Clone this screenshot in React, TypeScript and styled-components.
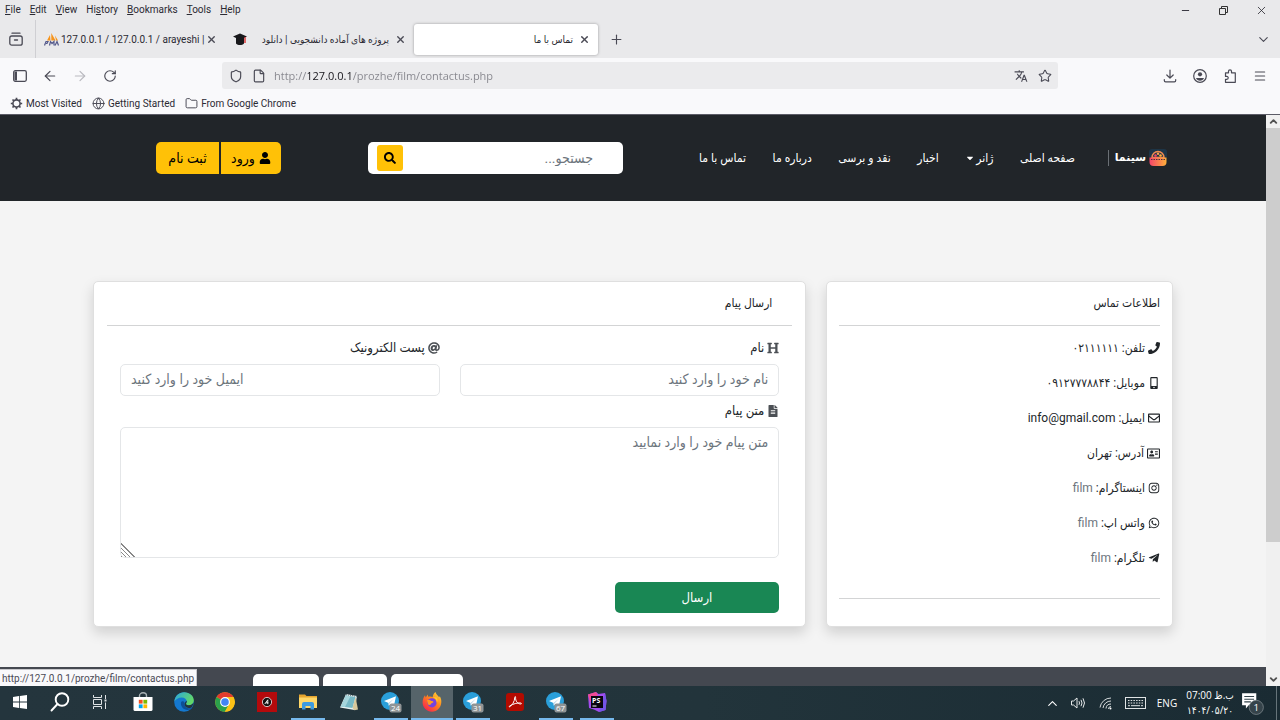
import React from 'react';
import styled, { createGlobalStyle } from 'styled-components';
import {
  FaPhone, FaMobileAlt, FaRegEnvelope, FaRegAddressCard, FaInstagram, FaWhatsapp,
  FaTelegramPlane, FaHeading, FaAt, FaFileAlt, FaUser, FaSearch, FaCaretDown,
} from 'react-icons/fa';
import { MdTranslate } from 'react-icons/md';
import {
  ArrowLeft, ArrowRight, RotateCw, Shield, File, Star, Menu, ChevronDown, ChevronUp,
  X, Plus, Minus, Globe, Folder,
} from 'lucide-react';

const persian = `Roboto, 'DejaVu Sans Condensed', 'DejaVu Sans', sans-serif`;
const system = `Roboto, 'DejaVu Sans Condensed', 'DejaVu Sans', sans-serif`;
const humanist = `'Open Sans', 'DejaVu Sans Condensed', 'DejaVu Sans', sans-serif`;

const GlobalStyle = createGlobalStyle`
  *, *::before, *::after { box-sizing: border-box; }
  body { margin: 0; font-family: ${persian}; color: #212529; }
  button, input, textarea { font: inherit; color: inherit; margin: 0; }
  button { border: 0; background: none; padding: 0; cursor: pointer; }
  a { color: inherit; text-decoration: none; }
`;

const Desktop = styled.div`
  display: flex;
  flex-direction: column;
  height: 100vh;
  overflow: hidden;
`;

/* ---------- browser window ---------- */

const Browser = styled.div`
  font-family: ${system};
  font-size: 10px;
  line-height: 16px;
  color: #2b2a33;
  background: #f9f9fb;
  border-bottom: 1px solid #5b5b66;
`;

const TitleBar = styled.div`
  background: #e9e9eb;
  display: flex;
  justify-content: space-between;
  align-items: center;
  height: 20px;
  padding-left: 5px;
`;

const MenuList = styled.div`
  display: flex;
  gap: 9px;
`;

const MenuButton = styled.button`
  u { text-underline-offset: 1px; }
`;

const WindowButtons = styled.div`
  display: flex;
`;

const WindowButton = styled.button`
  width: 38px;
  height: 20px;
  display: grid;
  place-items: center;
`;

const TabStrip = styled.div`
  background: #e9e9eb;
  height: 38px;
  display: flex;
  align-items: center;
`;

const ViewButton = styled.button`
  width: 36px;
  height: 38px;
  display: grid;
  place-items: center;
  padding-right: 3px;
  border-right: 1px solid #cfcfd3;
  color: #4a4a55;
`;

const Tab = styled.div<{ $active?: boolean }>`
  display: flex;
  align-items: center;
  width: ${p => (p.$active ? 184 : 189)}px;
  height: 31px;
  padding: 0 9px 0 8px;
  border-radius: 3px;
  background: ${p => (p.$active ? '#fff' : 'transparent')};
  box-shadow: ${p => (p.$active ? '0 0 3px rgba(0, 0, 0, 0.35)' : 'none')};
`;

const TabTitle = styled.button<{ $rtl?: boolean }>`
  flex: 1;
  min-width: 0;
  overflow: hidden;
  white-space: nowrap;
  padding: 1px ${p => (p.$rtl ? 6 : 0)}px 0 2px;
  text-align: ${p => (p.$rtl ? 'right' : 'left')};
  direction: ${p => (p.$rtl ? 'rtl' : 'ltr')};
`;

const IconButton = styled.button<{ $size?: number; $dim?: boolean }>`
  width: ${p => p.$size ?? 30}px;
  height: ${p => p.$size ?? 30}px;
  flex: none;
  display: grid;
  place-items: center;
  color: ${p => (p.$dim ? '#b9b9bf' : '#4a4a55')};
`;

const Spacer = styled.div`
  flex: 1;
`;

const Toolbar = styled.div`
  display: flex;
  align-items: center;
  height: 35px;
  padding: 0 5px;
`;

const AddressBar = styled.div`
  flex: 0 1 836px;
  display: flex;
  align-items: center;
  height: 27px;
  padding: 0 2px;
  border-radius: 3px;
  background: #ebebed;
`;

const ToolbarStart = styled.div`
  display: flex;
  flex: 1 0 160px;
`;

const ToolbarEnd = styled.div`
  display: flex;
  justify-content: flex-end;
  flex: 1 0 160px;
`;

const AddressInput = styled.input`
  flex: 1;
  min-width: 0;
  border: 0;
  outline: 0;
  padding: 0 0 0 4px;
  font-family: ${humanist};
  font-size: 11px;
  line-height: 18px;
  color: #85858c;
  background: linear-gradient(to right, #85858c 38px, #15141a 38px, #15141a 81px, #85858c 81px);
  background-clip: text;
  -webkit-background-clip: text;
  -webkit-text-fill-color: transparent;
`;

const Bookmarks = styled.div`
  display: flex;
  gap: 10px;
  height: 21px;
  padding: 0 10px;
`;

const Bookmark = styled.a`
  display: flex;
  align-items: center;
  gap: 3px;
  svg { color: #4a4a55; }
`;

/* ---------- web page ---------- */

const Viewport = styled.div`
  position: relative;
  flex: 1;
  min-height: 0;
  display: flex;
`;

const Page = styled.div`
  flex: 1;
  min-width: 0;
  overflow: hidden;
  background: #f4f4f4;
  direction: rtl;
  font-size: 12px;
  line-height: 18px;
`;

const Container = styled.div`
  width: 100%;
  max-width: 1080px;
  margin: 0 auto;
`;

const SiteHeader = styled.header`
  background: #212529;
  color: #fff;
`;

const HeaderRow = styled(Container)`
  display: flex;
  align-items: center;
  height: 86px;
  padding: 0 6px 0 63px;
`;

const Logo = styled.a`
  display: flex;
  align-items: center;
  gap: 3px;
  width: 59px;
  height: 16px;
  border-left: 1px solid #6b7075;
  font-family: 'DejaVu Sans', sans-serif;
  font-weight: 700;
  font-size: 11px;
  margin-left: 33px;
  white-space: nowrap;
`;

const Nav = styled.nav`
  flex: 0 1 376px;
  display: flex;
  justify-content: space-between;
  white-space: nowrap;
`;

const NavLink = styled.a`
  display: flex;
  align-items: center;
  gap: 1px;
  font-size: 12px;
`;

const SearchForm = styled.form`
  flex: 0 1 255px;
  display: flex;
  align-items: center;
  height: 32px;
  margin: 0 76px 0 auto;
  padding: 0 30px 0 9px;
  border-radius: 5px;
  background: #fff;
`;

const SearchInput = styled.input`
  flex: 1;
  min-width: 0;
  border: 0;
  outline: 0;
  padding: 0;
  background: none;
  color: #212529;
  font-size: 14px;
  &::placeholder { color: #6c757d; opacity: 1; }
`;

const SearchButton = styled.button`
  width: 26px;
  height: 26px;
  display: grid;
  place-items: center;
  border-radius: 3px;
  background: #ffc107;
  color: #000;
`;

const AuthGroup = styled.div`
  display: flex;
  gap: 2px;
  border-radius: 5px;
  overflow: hidden;
`;

const AuthLink = styled.a<{ $width: number }>`
  display: flex;
  align-items: center;
  justify-content: center;
  gap: 4px;
  width: ${p => p.$width}px;
  height: 32px;
  background: #ffc107;
  color: #000;
  font-size: 14px;
`;

const Cards = styled(Container)`
  display: grid;
  grid-template-columns: repeat(3, 1fr);
  gap: 20px;
  align-items: start;
  padding: 80px 0 40px;
`;

const Card = styled.section<{ $wide?: boolean }>`
  grid-column: span ${p => (p.$wide ? 2 : 1)};
  padding: 12px ${p => (p.$wide ? 13 : 12)}px 13px;
  border: 1px solid #dfdfdf;
  border-radius: 5px;
  background: #fff;
  box-shadow: 0 6px 13px rgba(0, 0, 0, 0.15);
`;

const CardTitle = styled.h2<{ $inset?: boolean }>`
  margin: 0;
  padding: 0 ${p => (p.$inset ? 20 : 0)}px 13px 0;
  border-bottom: 1px solid #d3d4d5;
  font-size: 12px;
  font-weight: 400;
  line-height: 18px;
`;

const ContactList = styled.ul`
  list-style: none;
  margin: 0;
  padding: 13px 0 31px;
  display: grid;
  gap: 17px;
  border-bottom: 1px solid #d3d4d5;
`;

const ContactItem = styled.li`
  display: flex;
  align-items: center;
  gap: 3px;
  white-space: pre;
  font-size: 12px;
  svg { flex: none; }
`;

const MutedLink = styled.a`
  color: #6c757d;
`;

const CardFoot = styled.div`
  height: 14px;
`;

const Form = styled.form`
  display: grid;
  grid-template-columns: 1fr 1fr;
  gap: 6px 20px;
  padding: 13px 13px 0;
`;

const Field = styled.div<{ $full?: boolean }>`
  grid-column: ${p => (p.$full ? '1 / -1' : 'auto')};
  display: grid;
  gap: 7px;
`;

const Label = styled.label`
  display: flex;
  align-items: center;
  gap: 3px;
  font-size: 13px;
  svg { color: #4c5055; }
`;

const TextInput = styled.input<{ $left?: boolean }>`
  width: 100%;
  height: 32px;
  padding: 0 10px 2px;
  border: 1px solid #e4e6e8;
  border-radius: 5px;
  outline: 0;
  background: #fff;
  font-size: 14px;
  text-align: ${p => (p.$left ? 'left' : 'right')};
  &::placeholder { color: #6c757d; opacity: 1; }
`;

const TextArea = styled.textarea`
  display: block;
  width: 100%;
  height: 131px;
  padding: 4px 10px;
  border: 1px solid #e4e6e8;
  border-radius: 5px;
  outline: 0;
  resize: vertical;
  background: #fff;
  font-size: 14px;
  line-height: 20px;
  &::placeholder { color: #6c757d; opacity: 1; }
  &::-webkit-resizer {
    background: linear-gradient(45deg,
      #888 0 1px, transparent 1px 3px, #888 3px 4px, transparent 4px 6px,
      #888 6px 7px, transparent 7px 9px, #888 9px 10px, transparent 10px);
  }
`;

const SubmitButton = styled.button`
  grid-column: 1 / -1;
  width: 25%;
  height: 31px;
  margin-top: 18px;
  border-radius: 5px;
  background: #198754;
  color: #fff;
  font-size: 13px;
`;

const SiteFooter = styled.footer`
  display: flex;
  direction: ltr;
  gap: 4px;
  height: 40px;
  padding: 7px 0 0 253px;
  background: #444850;
`;

const FooterBadge = styled.div<{ $width: number }>`
  width: ${p => p.$width}px;
  border-radius: 5px;
  background: #fff;
`;

const ScrollBar = styled.div`
  width: 14px;
  display: flex;
  flex-direction: column;
  background: #f0f0f0;
`;

const ScrollArrow = styled.button`
  height: 13px;
  display: grid;
  place-items: center;
  color: #505050;
`;

const ScrollTrack = styled.div`
  flex: 1;
`;

const ScrollThumb = styled.div`
  height: 76%;
  background: #cdcdcd;
`;

const StatusTip = styled.div`
  position: absolute;
  left: 0;
  bottom: 0;
  padding: 1px 2px 0;
  border: solid #c8c8cc;
  border-width: 1px 1px 0 0;
  background: #f9f9fb;
  color: #4a4a55;
  font-family: ${system};
  font-size: 10px;
  line-height: 15px;
`;

/* ---------- taskbar ---------- */

const Taskbar = styled.div`
  display: flex;
  align-items: stretch;
  height: 34px;
  background: linear-gradient(to right, #24353d, #22343b 55%, #1a2b33);
  color: #fff;
  font-family: ${humanist};
`;

const StartGroup = styled.div`
  display: flex;
  width: 120px;
`;

const AppGroup = styled.div`
  display: flex;
  width: 496px;
  margin-left: 2px;
`;

const TaskButton = styled.button<{ $active?: boolean; $open?: boolean }>`
  flex: 1;
  display: flex;
  flex-direction: column;
  align-items: center;
  justify-content: space-between;
  color: #fff;
  background: ${p => (p.$active ? '#56646a' : 'transparent')};
  &::after {
    content: '';
    width: ${p => (p.$active ? '100%' : '34px')};
    height: 2px;
    background: ${p => (p.$open ? '#76b9ed' : 'transparent')};
  }
  svg { margin: auto; }
`;

const Tray = styled.div`
  display: flex;
  align-items: center;
  padding-right: 3px;
`;

const TrayButton = styled.button<{ $width: number }>`
  width: ${p => p.$width}px;
  height: 34px;
  display: grid;
  place-items: center;
  color: #fff;
  font-size: 10px;
  line-height: 15px;
`;

const TrayEdge = styled.div`
  width: 1px;
  height: 34px;
  margin-left: 7px;
  background: #66747a;
`;

const WindowsIcon = () => (
  <svg width="14" height="14" viewBox="0 0 14 14" fill="#fff">
    <path d="M0 2l6-.9v5.5H0zM6.8 1L14 0v6.6H6.8zM0 7.4h6v5.5L0 12zM6.8 7.4H14V14l-7.2-1z" />
  </svg>
);

const LensIcon = () => (
  <svg width="20" height="20" viewBox="0 0 20 20" fill="none" stroke="#fff" strokeWidth="1.9" strokeLinecap="round">
    <circle cx="12" cy="7.5" r="6.3" />
    <path d="M7.5 12L1.5 18.5" />
  </svg>
);

const TaskViewIcon = () => (
  <svg width="16" height="14" viewBox="0 0 16 14" fill="none" stroke="#dfe3e5">
    <path d="M1.500 0v2.500h8V0M1.500 14v-2.500h8V14M1.500 4.500h8v5h-8zM13.500 0v4M13.500 7.500v6.500" />
    <path d="M12.500 4.500h2v2h-2z" fill="#dfe3e5" stroke="none" />
  </svg>
);

const StoreIcon = () => (
  <svg width="20" height="20" viewBox="0 0 20 20">
    <path d="M6.500 6V3.800a3.500 3 0 0 1 7 0V6" fill="none" stroke="#aab3b7" strokeWidth="1.400" />
    <path d="M.5 5h19v12.500a1.500 1.500 0 0 1-1.500 1.500H2a1.500 1.500 0 0 1-1.500-1.500z" fill="#fff" />
    <path d="M5.800 7.800h3.800v3.800H5.800z" fill="#f25022" />
    <path d="M10.400 7.800h3.800v3.800h-3.800z" fill="#7fba00" />
    <path d="M5.800 12.400h3.800v3.800H5.800z" fill="#00a4ef" />
    <path d="M10.400 12.400h3.800v3.800h-3.800z" fill="#ffb900" />
  </svg>
);

const EdgeIcon = () => (
  <svg width="20" height="20" viewBox="0 0 20 20">
    <defs>
      <linearGradient id="edge" x1="0" y1="0" x2="1" y2="0.500">
        <stop offset="0" stopColor="#2ba5e0" />
        <stop offset="1" stopColor="#62d868" />
      </linearGradient>
    </defs>
    <circle cx="10" cy="10" r="9.800" fill="#1478cf" />
    <path d="M.3 9.500C1 3.800 5.200.2 10.200.2c5.600 0 9.600 3.700 9.600 8 0 3-2.300 5-5 5-1.800 0-2.900-.6-2.900-1.200 0-.5.9-1 .9-2.500 0-2.300-2.100-4-5-4C4.600 5.500 1.500 7.200.3 9.500z" fill="url(#edge)" />
    <path d="M7 10.500c-.8 4.500 3.500 8.300 8.200 7.300 1.500-.4 2.700-1.200 3.600-2.300-4.500 2-8.800.5-8.300-4.700C9.700 8.800 7.500 8.900 7 10.500z" fill="#0d4f97" />
    <path d="M12.800 8.800c.3 1.700-1 2.500-.9 3.200.3.900 2 1.200 2.900 1.200 2.200 0 4-1.200 4.700-2.800-.2 2-1 3.700-2 5-3 1.200-5.900.3-6.800-2.200-.6-1.800.7-3.400 2.100-4.400z" fill="#22343b" />
  </svg>
);

const ChromeIcon = () => (
  <svg width="20" height="20" viewBox="0 0 20 20">
    <circle cx="10" cy="10" r="9.800" fill="#fbc116" />
    <path d="M10 10L1.500 5.100a9.800 9.800 0 0 1 17 0z" fill="#e33b2e" />
    <path d="M10 10L1.500 5.100A9.800 9.800 0 0 0 9.900 19.800L14 12.300z" fill="#2ba14b" />
    <path d="M10 5.100h8.500a9.800 9.800 0 0 1-8.600 14.700L14.200 12.500z" fill="#fbc116" />
    <circle cx="10" cy="10" r="4.900" fill="#fff" />
    <circle cx="10" cy="10" r="3.800" fill="#4285f4" />
  </svg>
);

const RedAppIcon = () => (
  <svg width="20" height="20" viewBox="0 0 20 20">
    <rect width="20" height="20" fill="#b40a0c" />
    <circle cx="10" cy="10" r="4.600" fill="#111" stroke="#eee" strokeWidth=".8" />
    <path d="M7.800 12L10.800 7.800V12.200M8.800 10.800h2.500" fill="none" stroke="#fff" strokeWidth=".9" />
  </svg>
);

const FolderIcon = () => (
  <svg width="20" height="18" viewBox="0 0 20 18">
    <path d="M1 1.500h6l1.500 1.500H19v4H1z" fill="#e6a52f" />
    <path d="M1 4.500h18V15H1z" fill="#ffd768" />
    <path d="M4 16.500V11a2 2 0 0 1 2-2h8a2 2 0 0 1 2 2v5.500h-3.500V13h-5v3.500z" fill="#3d9be0" />
  </svg>
);

const NotepadIcon = () => (
  <svg width="20" height="20" viewBox="0 0 20 20">
    <path d="M7 2l11 2-2.500 14L1 15.500z" fill="#e9f3f4" />
    <path d="M7 3.500l9.500 1.500-3 11L2 14.500z" fill="#77b9c6" />
    <path d="M7 3.500l4.500.8L6 15 2 14.500z" fill="#a6d6dd" />
    <path d="M16.500 5L19 17.500l-3.500.7-2-2.200z" fill="#d8c89b" />
    <path d="M7 2.600l11 1.800" stroke="#51636a" strokeDasharray="1 1" />
  </svg>
);

const TelegramIcon = ({ count }: { count: string }) => (
  <svg width="24" height="24" viewBox="0 0 24 24">
    <circle cx="11" cy="11" r="9" fill="#2a9fda" />
    <path d="M5 11l12-4.700-2.200 10.200-3.300-2.400-1.700 1.600-.3-2.800z" fill="#fff" />
    <path d="M9.500 12.900l5.300-4.200-4.300 4.900-.7 2.100z" fill="#b5d4e8" />
    <rect x="10.500" y="13.500" width="12" height="9" rx="2" fill="#8f9496" />
    <text x="16.500" y="21" textAnchor="middle" fontFamily="Open Sans, sans-serif" fontSize="8" fill="#fff">{count}</text>
  </svg>
);

const FirefoxIcon = () => (
  <svg width="20" height="20" viewBox="0 0 20 20">
    <defs>
      <linearGradient id="fire" x1="1" y1="0" x2="0.200" y2="1">
        <stop offset="0" stopColor="#ffe245" />
        <stop offset="0.450" stopColor="#ff8a1c" />
        <stop offset="1" stopColor="#f5204f" />
      </linearGradient>
    </defs>
    <path d="M13.500 0c.8 2.600 2.500 3.500 3.600 5.200l.7-1C19 6 19.500 8.200 19.300 10.500c-.4 5.300-4.400 9.200-9.400 9.200C4.700 19.700.6 15.700.6 10.600c0-3 .9-5.400 2.400-7.300l.7 2.100L5.700 2.500l.6 2.300c1.800-.6 3.400-.2 4.300.4C10.900 3.200 11.800 1.300 13.500 0z" fill="url(#fire)" />
    <circle cx="10" cy="10.800" r="4.600" fill="#7542e0" />
    <path d="M5 8.300c2-.7 3.500 0 4.500.8 1 .1 1.900.3 1.900.9 0 .8-1.200 1-2 1.300-.5 1.700-2 2-3.300 1.200z" fill="#ff9a1f" />
    <path d="M10.600 5.200c2.900.8 4.500 3 4.200 5.600 1.300-2 .9-4.200-.5-5.500z" fill="#ffc931" />
  </svg>
);

const AcrobatIcon = () => (
  <svg width="18" height="18" viewBox="0 0 18 18">
    <rect width="18" height="18" rx="3" fill="#b30b00" />
    <path d="M3.500 13.800c2.500-1.200 5.200-5.200 5.300-9.500 0-1 .9-1 .8 0-.3 4 2.200 6.800 5.200 6.700.9 0 .8-.9-.1-1-3.500-.5-7.500 1-10.700 2.800-1.100.6-1.300 1.400-.5 1z" fill="none" stroke="#fff" strokeWidth="1" />
  </svg>
);

const PhpStormIcon = () => (
  <svg width="20" height="20" viewBox="0 0 20 20">
    <path d="M1 2.500L9 0l2.500 2L18 1l1.500 8-1 9-6.500 2-5-2.500L2 16z" fill="#a24cf0" />
    <path d="M1 2.500L9 0l2 3-8 7z" fill="#f24a94" />
    <path d="M18 1l1.500 8-1 9-6.500 2 3-10z" fill="#7554e8" />
    <rect x="4" y="4" width="12" height="12" fill="#0a0510" />
    <text x="5" y="10.500" fontFamily="Open Sans, sans-serif" fontWeight="700" fontSize="7" fill="#fff">PS</text>
    <path d="M5.500 14h4" stroke="#fff" />
  </svg>
);

const SpeakerIcon = () => (
  <svg width="15" height="12" viewBox="0 0 15 12" fill="none" stroke="#e6e9ea">
    <path d="M.5 4v4h2L6 11V1L2.500 4z" />
    <path d="M8 4.200q1 1.800 0 3.600M10 2.800q2 3.200 0 6.400M12 1.300q3 4.700 0 9.400" />
  </svg>
);

const WifiIcon = () => (
  <svg width="14" height="14" viewBox="0 0 14 14" fill="none" stroke="#d5dadc">
    <path d="M1 11.500A11 11 0 0 1 12 2M4 12a8 8 0 0 1 8-7M7 12.500A5 5 0 0 1 12 8M9.500 13A2.500 2.500 0 0 1 12 10.500" />
    <circle cx="11.500" cy="12.500" r="1" fill="#fff" stroke="none" />
  </svg>
);

const KeyboardIcon = () => (
  <svg width="21" height="12" viewBox="0 0 21 12" fill="none" stroke="#e0e4e5">
    <rect x=".5" y=".5" width="20" height="11" />
    <path d="M3 3.500h15M3 6h15" strokeDasharray="1.500 1.200" />
    <path d="M3 8.700h2M6 8.700h9M16 8.700h2" />
  </svg>
);

const NoticeIcon = () => (
  <svg width="24" height="24" viewBox="0 0 22 22">
    <path d="M1 2h13v11H7l-2.500 3v-3H1z" fill="#fff" />
    <path d="M3 5h9M3 7.500h9M3 10h6" stroke="#33434a" />
    <circle cx="14" cy="15" r="6.500" fill="#35434a" stroke="#7d888d" strokeWidth=".7" />
    <text x="14" y="18.500" textAnchor="middle" fontFamily="Open Sans, sans-serif" fontSize="9" fill="#fff">1</text>
  </svg>
);

const CinemaIcon = () => (
  <svg width="18" height="18" viewBox="0 0 18 18">
    <defs>
      <linearGradient id="reel" x1="0" y1="0" x2="1" y2="0">
        <stop offset="0" stopColor="#f5456a" />
        <stop offset="1" stopColor="#ffb03a" />
      </linearGradient>
    </defs>
    <rect width="18" height="10" rx="3" fill="#1d3547" />
    <path d="M3 8.500a6 6 0 0 1 12 0z" fill="none" stroke="#f08a50" strokeWidth="1.500" />
    <circle cx="6.500" cy="6.500" r="1.300" fill="#f5456a" />
    <circle cx="9" cy="4.700" r="1.200" fill="#f5a050" />
    <circle cx="11.500" cy="6.500" r="1.300" fill="#ffb03a" />
    <path d="M.5 8.500h17v4.500a4 4 0 0 1-4 4h-9a4 4 0 0 1-4-4z" fill="url(#reel)" />
    <path d="M2 10.500h14" stroke="#4a3040" strokeWidth="1.200" strokeDasharray="1.500 1" />
  </svg>
);

const ViewIcon = () => (
  <svg width="14" height="14" viewBox="0 0 14 14" fill="none" stroke="currentColor" strokeWidth="1.300" strokeLinecap="round">
    <path d="M3 1.200h8" />
    <rect x=".8" y="4" width="12.400" height="9.200" rx="2" />
    <path d="M5.500 8h3" />
  </svg>
);

const SidebarIcon = () => (
  <svg width="14" height="12" viewBox="0 0 14 12" fill="none" stroke="currentColor" strokeWidth="1.300">
    <rect x=".7" y=".7" width="12.600" height="10.600" rx="1.500" />
    <path d="M1.500 1.500h2.500v9H1.500z" fill="currentColor" stroke="none" />
  </svg>
);

const DownloadIcon = () => (
  <svg width="14" height="14" viewBox="0 0 14 14" fill="none" stroke="currentColor" strokeWidth="1.200" strokeLinecap="round" strokeLinejoin="round">
    <path d="M7 1v8M3.800 6L7 9.200 10.200 6M1.300 10.500v1a1.300 1.300 0 0 0 1.300 1.300h8.800a1.300 1.300 0 0 0 1.300-1.300v-1" />
  </svg>
);

const AccountIcon = () => (
  <svg width="14" height="14" viewBox="0 0 14 14">
    <circle cx="7" cy="7" r="6.300" fill="none" stroke="currentColor" strokeWidth="1.200" />
    <circle cx="7" cy="5.300" r="2.100" fill="currentColor" />
    <path d="M3 9h8c-.6 1.800-2.200 2.800-4 2.800S3.600 10.800 3 9z" fill="currentColor" />
  </svg>
);

const ExtensionIcon = () => (
  <svg width="13" height="14" viewBox="0 0 13 14" fill="none" stroke="currentColor" strokeWidth="1.200" strokeLinejoin="round">
    <path d="M1.500 4.500V3.800h3V2.300a1.500 1.500 0 0 1 3 0v1.500h3.800v9.500H1.500v-3h1.300a1.400 1.400 0 0 0 0-2.900H1.500z" />
  </svg>
);

const RestoreIcon = () => (
  <svg width="9" height="9" viewBox="0 0 9 9" fill="none" stroke="#333">
    <path d="M.5 2.500h6v6h-6zM2.500 2.500v-2h6v6h-2" />
  </svg>
);

const GearIcon = () => (
  <svg width="13" height="13" viewBox="0 0 13 13" fill="none" stroke="currentColor">
    <circle cx="6.500" cy="6.500" r="3.600" strokeWidth="1.600" />
    <path d="M6.500 .8v2M6.500 10.200v2M.8 6.500h2M10.200 6.500h2M2.500 2.500l1.400 1.400M9.100 9.100l1.400 1.400M2.500 10.500l1.400-1.400M9.100 3.900l1.400-1.400" strokeWidth="1.700" />
  </svg>
);

const PmaIcon = () => (
  <svg width="15" height="13" viewBox="0 0 15 13">
    <path d="M3 7.500L6 2l.5 5.500zM7.300 7.500V0l4.200 7.500zM11 2.500l3 5h-2z" fill="#f6941d" />
    <path d="M.5 12.500L2 8.500h2l-1 2H2M5.500 12.500l1-4 1.500 2 2-2v4M11 12.500l2-4 1.500 4" fill="none" stroke="#555a8c" strokeWidth="1.200" />
  </svg>
);

const GradCapIcon = () => (
  <svg width="14" height="13" viewBox="0 0 14 13">
    <path d="M0 3.500L7 .5l7 3-3 1.500v5.500c-2 2-6 2-8 0V5z" fill="#18181b" />
    <path d="M12 4.300V10" stroke="#d22" strokeWidth="1.300" />
  </svg>
);

const menus: [string, string, string][] = [
  ['', 'F', 'ile'], ['', 'E', 'dit'], ['', 'V', 'iew'], ['Hi', 's', 'tory'],
  ['', 'B', 'ookmarks'], ['', 'T', 'ools'], ['', 'H', 'elp'],
];

const navLinks = ['صفحه اصلی', 'ژانر', 'اخبار', 'نقد و برسی', 'درباره ما', 'تماس با ما'];

const contacts = [
  { icon: <FaPhone size={12} />, label: 'تلفن', value: '۰۲۱۱۱۱۱۱' },
  { icon: <FaMobileAlt size={12} />, label: 'موبایل', value: '۰۹۱۲۷۷۷۸۸۴۴' },
  { icon: <FaRegEnvelope size={12} />, label: 'ایمیل', value: 'info@gmail.com' },
  { icon: <FaRegAddressCard size={13} />, label: 'آدرس', value: 'تهران' },
  { icon: <FaInstagram size={12} />, label: 'اینستاگرام', link: 'film' },
  { icon: <FaWhatsapp size={12} />, label: 'واتس اپ', link: 'film' },
  { icon: <FaTelegramPlane size={12} />, label: 'تلگرام', link: 'film' },
];

const apps = [
  { name: 'Store', icon: <StoreIcon /> },
  { name: 'Edge', icon: <EdgeIcon /> },
  { name: 'Chrome', icon: <ChromeIcon /> },
  { name: 'Player', icon: <RedAppIcon /> },
  { name: 'Explorer', icon: <FolderIcon />, open: true },
  { name: 'Notepad', icon: <NotepadIcon /> },
  { name: 'Telegram', icon: <TelegramIcon count="24" />, open: true },
  { name: 'Firefox', icon: <FirefoxIcon />, open: true, active: true },
  { name: 'Telegram 2', icon: <TelegramIcon count="31" />, open: true },
  { name: 'Acrobat', icon: <AcrobatIcon /> },
  { name: 'Telegram 3', icon: <TelegramIcon count="67" />, open: true },
  { name: 'PhpStorm', icon: <PhpStormIcon />, open: true },
];

const CloseTab = () => (
  <IconButton $size={10} aria-label="Close tab"><X size={11} strokeWidth={3} /></IconButton>
);

const BrowserChrome = () => (
  <Browser>
    <TitleBar>
      <MenuList>
        {menus.map(([before, key, after]) => (
          <MenuButton key={before + key + after}>{before}<u>{key}</u>{after}</MenuButton>
        ))}
      </MenuList>
      <WindowButtons>
        <WindowButton aria-label="Minimize"><Minus size={11} strokeWidth={2} /></WindowButton>
        <WindowButton aria-label="Restore"><RestoreIcon /></WindowButton>
        <WindowButton aria-label="Close"><X size={13} strokeWidth={1.5} /></WindowButton>
      </WindowButtons>
    </TitleBar>
    <TabStrip>
      <ViewButton aria-label="Firefox View"><ViewIcon /></ViewButton>
      <Tab>
        <PmaIcon />
        <TabTitle>127.0.0.1 / 127.0.0.1 / arayeshi |</TabTitle>
        <CloseTab />
      </Tab>
      <Tab>
        <GradCapIcon />
        <TabTitle $rtl>پروژه های آماده دانشجویی | دانلود</TabTitle>
        <CloseTab />
      </Tab>
      <Tab $active>
        <TabTitle $rtl>تماس با ما</TabTitle>
        <CloseTab />
      </Tab>
      <IconButton $size={36} aria-label="New tab"><Plus size={15} strokeWidth={1.8} /></IconButton>
      <Spacer />
      <IconButton $size={34} aria-label="List all tabs"><ChevronDown size={15} strokeWidth={1.8} /></IconButton>
    </TabStrip>
    <Toolbar>
      <ToolbarStart>
        <IconButton aria-label="Sidebar"><SidebarIcon /></IconButton>
        <IconButton aria-label="Back"><ArrowLeft size={16} strokeWidth={1.8} /></IconButton>
        <IconButton $dim aria-label="Forward"><ArrowRight size={16} strokeWidth={1.8} /></IconButton>
        <IconButton aria-label="Reload"><RotateCw size={14} strokeWidth={2} /></IconButton>
      </ToolbarStart>
      <AddressBar>
        <IconButton $size={23} aria-label="Protections"><Shield size={14} strokeWidth={2} /></IconButton>
        <IconButton $size={23} aria-label="Site information"><File size={14} strokeWidth={2} /></IconButton>
        <AddressInput aria-label="Address" defaultValue="http://127.0.0.1/prozhe/film/contactus.php" />
        <IconButton $size={24} aria-label="Translate"><MdTranslate size={14} /></IconButton>
        <IconButton $size={23} aria-label="Bookmark this page"><Star size={14} strokeWidth={1.8} /></IconButton>
      </AddressBar>
      <ToolbarEnd>
        <IconButton aria-label="Downloads"><DownloadIcon /></IconButton>
        <IconButton aria-label="Account"><AccountIcon /></IconButton>
        <IconButton aria-label="Extensions"><ExtensionIcon /></IconButton>
        <IconButton aria-label="Application menu"><Menu size={14} strokeWidth={1.8} /></IconButton>
      </ToolbarEnd>
    </Toolbar>
    <Bookmarks>
      <Bookmark href="#"><GearIcon />Most Visited</Bookmark>
      <Bookmark href="#"><Globe size={13} strokeWidth={1.8} />Getting Started</Bookmark>
      <Bookmark href="#"><Folder size={13} strokeWidth={1.8} />From Google Chrome</Bookmark>
    </Bookmarks>
  </Browser>
);

const ContactCard = () => (
  <Card>
    <CardTitle>اطلاعات تماس</CardTitle>
    <ContactList>
      {contacts.map(item => (
        <ContactItem key={item.label}>
          {item.icon}
          <span>{item.label}:</span>
          {item.link
            ? <MutedLink href="#">{item.link}</MutedLink>
            : <span>{item.value}</span>}
        </ContactItem>
      ))}
    </ContactList>
    <CardFoot />
  </Card>
);

const MessageCard = () => (
  <Card $wide>
    <CardTitle $inset>ارسال پیام</CardTitle>
    <Form onSubmit={e => e.preventDefault()}>
      <Field>
        <Label htmlFor="name"><FaHeading size={12} />نام</Label>
        <TextInput id="name" placeholder="نام خود را وارد کنید" />
      </Field>
      <Field>
        <Label htmlFor="email"><FaAt size={12} />پست الکترونیک</Label>
        <TextInput id="email" $left placeholder="ایمیل خود را وارد کنید" />
      </Field>
      <Field $full>
        <Label htmlFor="message"><FaFileAlt size={12} />متن پیام</Label>
        <TextArea id="message" placeholder="متن پیام خود را وارد نمایید" />
      </Field>
      <SubmitButton type="submit">ارسال</SubmitButton>
    </Form>
  </Card>
);

export default function App() {
  return (
    <Desktop>
      <GlobalStyle />
      <BrowserChrome />
      <Viewport>
        <Page lang="fa">
          <SiteHeader>
            <HeaderRow>
              <Logo href="#"><CinemaIcon />سینما</Logo>
              <Nav>
                {navLinks.map((text, i) => (
                  <NavLink href="#" key={text}>{text}{i === 1 && <FaCaretDown size={10} />}</NavLink>
                ))}
              </Nav>
              <SearchForm onSubmit={e => e.preventDefault()}>
                <SearchInput aria-label="جستجو" placeholder="جستجو..." />
                <SearchButton aria-label="جستجو"><FaSearch size={12} /></SearchButton>
              </SearchForm>
              <AuthGroup>
                <AuthLink href="#" $width={60}><FaUser size={12} />ورود</AuthLink>
                <AuthLink href="#" $width={63}>ثبت نام</AuthLink>
              </AuthGroup>
            </HeaderRow>
          </SiteHeader>
          <Cards>
            <ContactCard />
            <MessageCard />
          </Cards>
          <SiteFooter>
            <FooterBadge $width={66} />
            <FooterBadge $width={64} />
            <FooterBadge $width={72} />
          </SiteFooter>
        </Page>
        <ScrollBar>
          <ScrollArrow aria-label="Scroll up"><ChevronUp size={11} strokeWidth={4} /></ScrollArrow>
          <ScrollTrack><ScrollThumb /></ScrollTrack>
          <ScrollArrow aria-label="Scroll down"><ChevronDown size={11} strokeWidth={4} /></ScrollArrow>
        </ScrollBar>
        <StatusTip>http://127.0.0.1/prozhe/film/contactus.php</StatusTip>
      </Viewport>
      <Taskbar>
        <StartGroup>
          <TaskButton aria-label="Start"><WindowsIcon /></TaskButton>
          <TaskButton aria-label="Search"><LensIcon /></TaskButton>
          <TaskButton aria-label="Task view"><TaskViewIcon /></TaskButton>
        </StartGroup>
        <AppGroup>
          {apps.map(app => (
            <TaskButton key={app.name} aria-label={app.name} $open={app.open} $active={app.active}>
              {app.icon}
            </TaskButton>
          ))}
        </AppGroup>
        <Spacer />
        <Tray>
          <TrayButton $width={26} aria-label="Hidden icons"><ChevronUp size={15} strokeWidth={1.8} /></TrayButton>
          <TrayButton $width={27} aria-label="Volume"><SpeakerIcon /></TrayButton>
          <TrayButton $width={27} aria-label="Network"><WifiIcon /></TrayButton>
          <TrayButton $width={32} aria-label="Keyboard"><KeyboardIcon /></TrayButton>
          <TrayButton $width={32}>ENG</TrayButton>
          <TrayButton $width={54}><span>07:00 ب.ظ<br />۱۴۰۴/۰۵/۲۰</span></TrayButton>
          <TrayButton $width={32} aria-label="Notifications"><NoticeIcon /></TrayButton>
          <TrayEdge />
        </Tray>
      </Taskbar>
    </Desktop>
  );
}
